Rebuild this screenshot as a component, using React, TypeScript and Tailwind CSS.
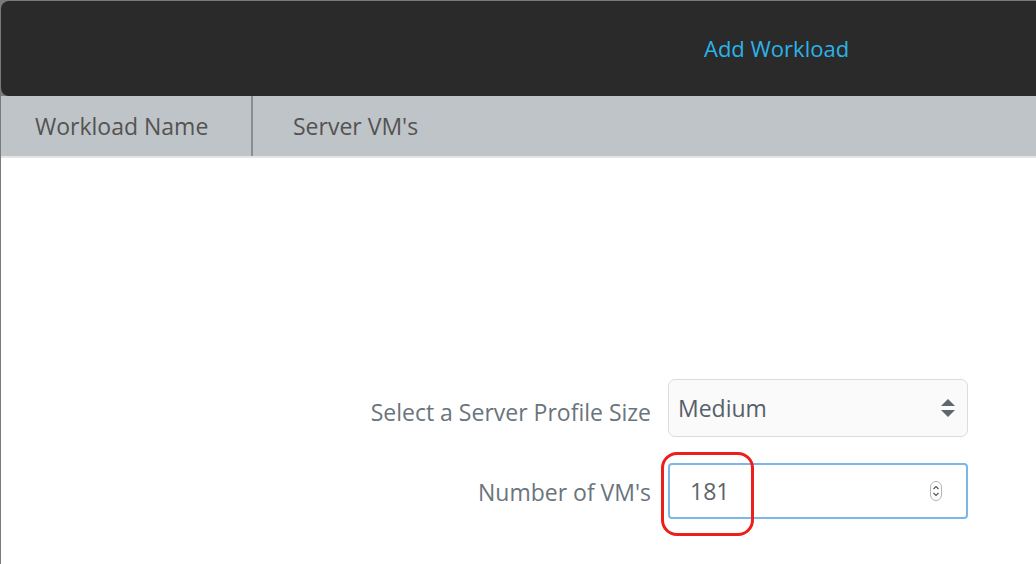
export default function App() {
  return (
    <main
      className="w-[1036px] h-[564px] bg-[#7a7a7a] pt-px pl-px overflow-hidden flex flex-col"
      style={{ fontFamily: '"Open Sans", sans-serif' }}>
      <header className="h-[95px] shrink-0 bg-[#2a2a2a] rounded-l-[8px] flex items-center">
        <a className="ml-[703px] text-[22px] text-[#2bb3e8]">Add Workload</a>
      </header>
      <section className="flex-1 flex flex-col bg-white">
        <div className="h-[62px] shrink-0 flex bg-[#bfc4c8] border-b-2 border-[#e3e5e7] text-[23px] text-[#535353]">
          <div className="w-[252px] pl-[34px] flex items-center border-r-2 border-[#8a8e92]">
            Workload Name
          </div>
          <div className="pl-[40px] flex items-center">Server VM's</div>
        </div>
        <div className="flex flex-col pt-[221px] gap-[26px]">
          <div className="flex items-center">
            <label className="w-[650px] mt-[8px] text-right text-[23px] text-[#6a747c]">
              Select a Server Profile Size
            </label>
            <div className="ml-[17px] w-[300px] h-[58px] rounded-[7px] border border-[#dcdcdc] bg-[#fafafa] flex items-center pl-[9px] pr-[11px]">
              <span className="flex-1 text-[23px] text-[#56606a]">Medium</span>
              <svg width="16" height="20" viewBox="0 0 16 20">
                <path d="M8 1 L15 8 L1 8 Z" fill="#5f666c" />
                <path d="M8 19 L15 12 L1 12 Z" fill="#5f666c" />
              </svg>
            </div>
          </div>
          <div className="flex items-center">
            <label className="w-[650px] mt-[2px] text-right text-[23px] text-[#6a747c]">
              Number of VM's
            </label>
            <div className="relative ml-[17px] w-[300px] h-[56px] rounded-[4px] border-2 border-[#7db7e8] bg-white flex items-center pl-[20px] pr-[24px]">
              <span className="flex-1 text-[23px] text-[#5c646b]">181</span>
              <div className="w-[12px] h-[20px] rounded-full border border-[#b5b5b5] flex flex-col items-center justify-center">
                <svg width="8" height="14" viewBox="0 0 8 14">
                  <path d="M1.5 5 L4 2.5 L6.5 5" fill="none" stroke="#555" strokeWidth="1.2" />
                  <path d="M1.5 9 L4 11.5 L6.5 9" fill="none" stroke="#555" strokeWidth="1.2" />
                </svg>
              </div>
              <div className="absolute left-[-9px] top-[-13px] w-[93px] h-[84px] rounded-[16px] border-[3px] border-[#ec1f1a]" />
            </div>
          </div>
        </div>
      </section>
    </main>
  );
}
